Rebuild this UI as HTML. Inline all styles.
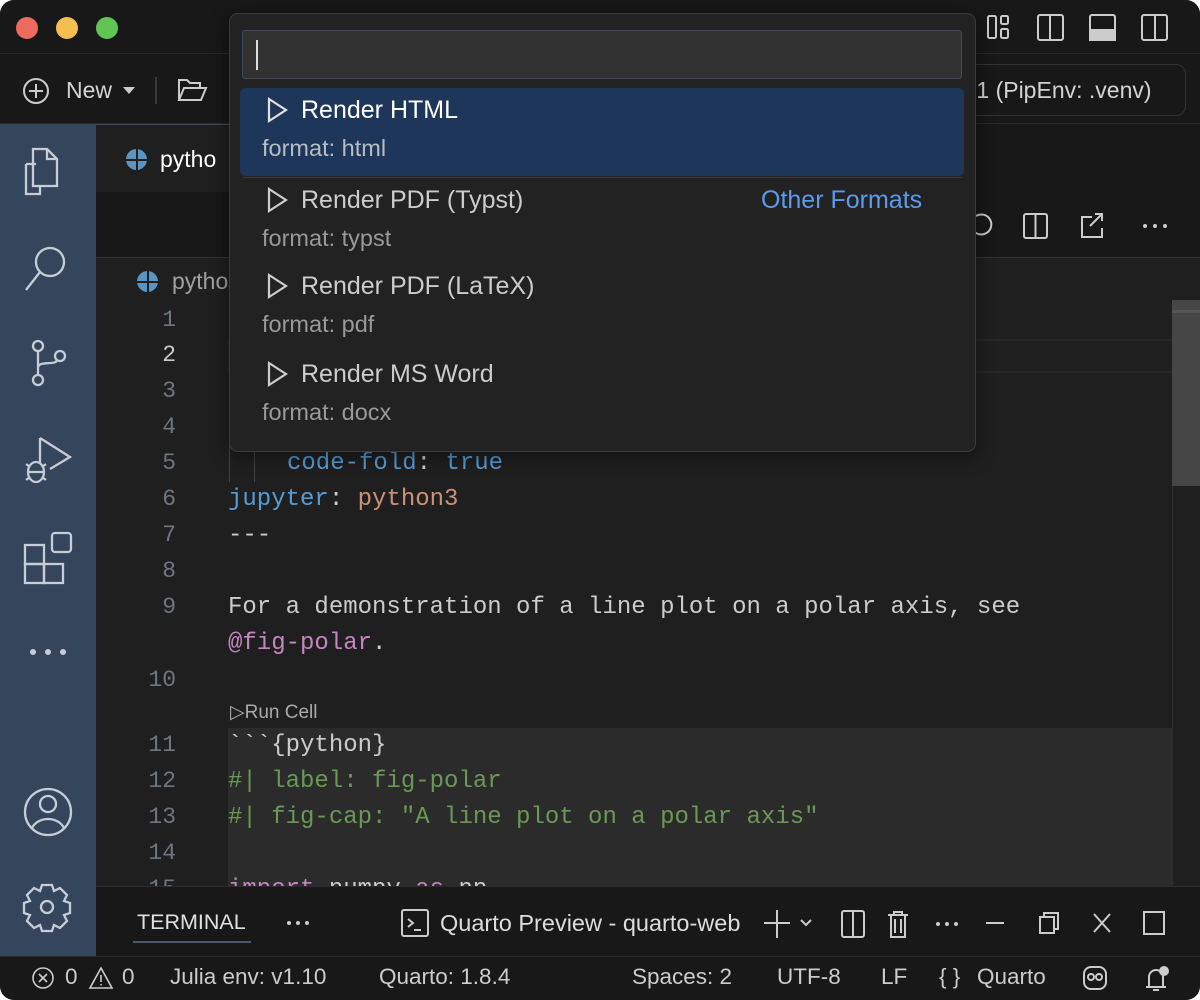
<!DOCTYPE html>
<html><head><meta charset="utf-8"><style>
*{margin:0;padding:0;box-sizing:border-box}
body{width:1200px;height:1000px;background:#fff;font-family:"Liberation Sans",sans-serif;overflow:hidden;position:relative}
.win{position:absolute;left:0;top:0;width:1200px;height:1000px;background:#1f1f1f;border-radius:14px;overflow:hidden}
.abs{position:absolute}
.t{position:absolute;white-space:pre;color:#cccccc}
.mono{font-family:"Liberation Mono",monospace;font-size:24px}
.ln{position:absolute;width:80px;left:96px;text-align:right;color:#6e7681;font-family:"Liberation Mono",monospace;font-size:23px}
.sb{position:absolute;top:964px;font-size:22.5px;color:#ccc;white-space:pre}
svg{position:absolute}
</style></head><body><div class="win">
<div class="abs" style="left:0;top:0;width:1200px;height:54px;background:#181818;border-bottom:1px solid #2b2b2b"></div>
<div class="abs" style="left:16px;top:17px;width:22px;height:22px;border-radius:50%;background:#ec6a5e"></div>
<div class="abs" style="left:56px;top:17px;width:22px;height:22px;border-radius:50%;background:#f4bf4f"></div>
<div class="abs" style="left:96px;top:17px;width:22px;height:22px;border-radius:50%;background:#61c554"></div>
<svg style="left:980px;top:10px" width="200" height="36" fill="none" stroke="#cccccc" stroke-width="2">
<rect x="8" y="6" width="8" height="22" rx="1.5"/><rect x="21" y="6" width="7" height="8" rx="1.5"/><rect x="21" y="19" width="7" height="9" rx="1.5"/>
<rect x="58" y="5" width="25" height="25" rx="2"/><line x1="70" y1="5" x2="70" y2="30"/>
<rect x="110" y="5" width="25" height="25" rx="2"/><rect x="110" y="20" width="25" height="10" fill="#cccccc"/>
<rect x="162" y="5" width="25" height="25" rx="2"/><line x1="175" y1="5" x2="175" y2="30"/>
</svg>
<div class="abs" style="left:0;top:54px;width:1200px;height:70px;background:#181818;border-bottom:1px solid #2b2b2b"></div>
<svg style="left:22px;top:77px" width="28" height="28" fill="none" stroke="#cccccc" stroke-width="2"><circle cx="14" cy="14" r="12"/><line x1="14" y1="7" x2="14" y2="21"/><line x1="7" y1="14" x2="21" y2="14"/></svg>
<div class="t" style="left:66px;top:77px;font-size:23px;color:#d4d4d4">New</div>
<svg style="left:122px;top:86px" width="14" height="10"><path d="M1 1 L13 1 L7 8 Z" fill="#cccccc"/></svg>
<div class="abs" style="left:155px;top:77px;width:2px;height:27px;background:#3a3a3a"></div>
<svg style="left:176px;top:76px" width="32" height="28" fill="none" stroke="#cccccc" stroke-width="2"><path d="M3 24 V4 H11 L14 7 H24 V11 M3 24 L8 12 H30 L25 24 Z"/></svg>
<div class="abs" style="left:900px;top:64px;width:286px;height:52px;border:1px solid #333;border-radius:10px"></div>
<div class="t" style="left:970px;top:77px;font-size:23px;color:#d4d4d4">.1 (PipEnv: .venv)</div>
<div class="abs" style="left:0;top:124px;width:96px;height:832px;background:#35455b"></div>
<svg style="left:0;top:124px" width="96" height="832" fill="none" stroke="#c5cdd8" stroke-width="2.3">
<path d="M26 40 h10 M26 40 v30 h14 v-8 M33 25 h14 l10 10 v27 h-24 z M47 25 v10 h10"/>
<circle cx="50" cy="138" r="14"/><line x1="40" y1="148" x2="26" y2="166"/>
<circle cx="38" cy="222" r="5"/><circle cx="38" cy="256" r="5"/><circle cx="60" cy="232" r="5"/><path d="M38 227 V251 M38 244 C38 236 56 242 57 236"/>
<path d="M40 314 L70 333 L50 345 M40 314 V340"/><ellipse cx="36" cy="348" rx="8" ry="10"/><path d="M26 340 l4 3 M26 356 l4-3 M46 340 l-4 3 M46 356 l-4-3 M28 348 h16"/>
<rect x="25" y="421" width="19" height="19"/><rect x="25" y="440" width="19" height="19"/><rect x="44" y="440" width="19" height="19"/><rect x="52" y="409" width="19" height="19" rx="3"/>
<circle cx="48" cy="688" r="23"/><circle cx="48" cy="680" r="8"/><path d="M32 704 C38 692 58 692 64 704"/>
<circle cx="47" cy="783" r="6"/><path d="M42 761 h10 l2 6 6-3 7 7-3 6 6 2 v10 l-6 2 3 6-7 7-6-3-2 6 h-10 l-2-6-6 3-7-7 3-6-6-2 v-10 l6-2-3-6 7-7 6 3 z"/>
</svg>
<div class="abs" style="left:30px;top:649px;width:6px;height:6px;border-radius:50%;background:#c5cdd8;box-shadow:15px 0 #c5cdd8,30px 0 #c5cdd8"></div>
<div class="abs" style="left:96px;top:124px;width:1104px;height:134px;background:#181818;border-bottom:1px solid #333"></div>
<div class="abs" style="left:96px;top:124px;width:136px;height:68px;background:#1f1f1f;border-top:1px solid #3b4b63"></div>
<div class="abs" style="left:126px;top:149px;width:21px;height:21px;border-radius:50%;background:#5b94c1"></div>
<div class="abs" style="left:135.5px;top:149px;width:2px;height:21px;background:#1f1f1f"></div><div class="abs" style="left:126px;top:158.5px;width:21px;height:2px;background:#1f1f1f"></div>
<div class="t" style="left:160px;top:146px;font-size:23px;color:#fff">pytho</div>
<svg style="left:960px;top:208px" width="210" height="36" fill="none" stroke="#cccccc" stroke-width="2"><path d="M16 8 a10 10 0 1 1 -3 14"/><rect x="64" y="6" width="23" height="24" rx="2"/><line x1="75.5" y1="6" x2="75.5" y2="30"/><path d="M132 9 h-10 v20 h20 v-9 M130 18 l12-12 M135 6 h7 v7"/></svg>
<div class="abs" style="left:1143px;top:224px;width:4px;height:4px;border-radius:50%;background:#ccc;box-shadow:10px 0 #ccc,20px 0 #ccc"></div>
<div class="abs" style="left:137px;top:271px;width:21px;height:21px;border-radius:50%;background:#5b94c1"></div>
<div class="abs" style="left:146.5px;top:271px;width:2px;height:21px;background:#1f1f1f"></div><div class="abs" style="left:137px;top:280.5px;width:21px;height:2px;background:#1f1f1f"></div>
<div class="t" style="left:172px;top:268px;font-size:23px;color:#a0a0a0">pytho</div>
<div class="abs" style="left:228px;top:339px;width:970px;height:34px;border:2px solid #282828"></div>
<div class="abs" style="left:1172px;top:300px;width:28px;height:186px;background:#464646"></div>
<div class="abs" style="left:1172px;top:310px;width:28px;height:3px;background:#555"></div>
<div class="abs" style="left:228px;top:728px;width:944px;height:158px;background:#2b2b2b"></div>
<div class="abs" style="left:1172px;top:486px;width:1px;height:400px;background:#2e2e2e"></div>
<div class="ln" style="top:307px">1</div><div class="ln" style="top:342px;color:#ccc">2</div><div class="ln" style="top:378px">3</div><div class="ln" style="top:414px">4</div><div class="ln" style="top:450px">5</div><div class="ln" style="top:486px">6</div><div class="ln" style="top:522px">7</div><div class="ln" style="top:558px">8</div><div class="ln" style="top:594px">9</div><div class="ln" style="top:667px">10</div><div class="ln" style="top:732px">11</div><div class="ln" style="top:768px">12</div><div class="ln" style="top:804px">13</div><div class="ln" style="top:840px">14</div><div class="ln" style="top:876px">15</div>
<div class="abs" style="left:229px;top:440px;width:1px;height:42px;background:#444"></div>
<div class="abs" style="left:254px;top:440px;width:1px;height:42px;background:#444"></div>
<div class="t mono" style="left:287px;top:450px"><span style="color:#569cd6">code-fold</span>: <span style="color:#569cd6">true</span></div>
<div class="t mono" style="left:228px;top:486px"><span style="color:#569cd6">jupyter</span>: <span style="color:#ce9178">python3</span></div>
<div class="t mono" style="left:228px;top:522px">---</div>
<div class="t mono" style="left:228px;top:594px">For a demonstration of a line plot on a polar axis, see</div>
<div class="t mono" style="left:228px;top:630px"><span style="color:#c586c0">@fig-polar</span>.</div>
<div class="t" style="left:230px;top:701px;font-size:19px;color:#aaa">▷Run Cell</div>
<div class="t mono" style="left:228px;top:732px">&#96;&#96;&#96;{python}</div>
<div class="t mono" style="left:228px;top:768px;color:#6a9955">#| label: fig-polar</div>
<div class="t mono" style="left:228px;top:804px;color:#6a9955">#| fig-cap: "A line plot on a polar axis"</div>
<div class="t mono" style="left:228px;top:876px"><span style="color:#c586c0">import</span> numpy <span style="color:#c586c0">as</span> np</div>
<div class="abs" style="left:96px;top:886px;width:1104px;height:70px;background:#181818;border-top:1px solid #2b2b2b"></div>
<div class="t" style="left:137px;top:910px;font-size:21.5px;color:#e0e0e0">TERMINAL</div>
<div class="abs" style="left:133px;top:941px;width:118px;height:2px;background:#4a5a73"></div>
<div class="abs" style="left:287px;top:921px;width:4px;height:4px;border-radius:50%;background:#ccc;box-shadow:9px 0 #ccc,18px 0 #ccc"></div>
<svg style="left:400px;top:908px" width="780" height="32" fill="none" stroke="#cccccc" stroke-width="2">
<rect x="2" y="2" width="26" height="26" rx="2"/><path d="M8 11 l5 4 -5 4 M14 22 h7"/>
<path d="M377 2 v28 M364 15 h26 M401 12 l5 5 5-5"/>
<rect x="442" y="3" width="22" height="26" rx="2"/><line x1="453" y1="3" x2="453" y2="29"/>
<path d="M488 7 h20 M494 7 v-3 h8 v3 M491 7 v22 h14 v-22 M495 11 v14 M501 11 v14"/>
<path d="M586 15 h18 M640 9 h14 v16 h-14 z M644 9 v-4 h14 v16 h-4 M694 6 l16 18 M710 6 l-16 18"/>
<rect x="744" y="4" width="20" height="22"/>
</svg>
<div class="abs" style="left:936px;top:922px;width:4px;height:4px;border-radius:50%;background:#ccc;box-shadow:9px 0 #ccc,18px 0 #ccc"></div>
<div class="t" style="left:440px;top:910px;font-size:23.5px;color:#ddd">Quarto Preview - quarto-web</div>
<div class="abs" style="left:0;top:956px;width:1200px;height:44px;background:#181818;border-top:1px solid #2b2b2b"></div>
<svg style="left:30px;top:965px" width="90" height="28" fill="none" stroke="#ccc" stroke-width="1.6"><circle cx="13" cy="13" r="10"/><path d="M9 9 l8 8 M17 9 l-8 8"/><path d="M71 3 L82 23 H60 Z M71 10 v7 M71 19 v1.5"/></svg>
<div class="sb" style="left:65px">0</div><div class="sb" style="left:122px">0</div>
<div class="sb" style="left:170px">Julia env: v1.10</div>
<div class="sb" style="left:379px">Quarto: 1.8.4</div>
<div class="sb" style="left:632px">Spaces: 2</div>
<div class="sb" style="left:777px">UTF-8</div>
<div class="sb" style="left:881px">LF</div>
<div class="sb" style="left:939px">{ }</div>
<div class="sb" style="left:977px">Quarto</div>
<svg style="left:1080px;top:963px" width="100" height="30" fill="none" stroke="#ccc" stroke-width="2"><rect x="4" y="4" width="22" height="22" rx="7"/><circle cx="11" cy="14" r="3"/><circle cx="19" cy="14" r="3"/><path d="M66 24 h20 M69 24 v-10 a7 7 0 0 1 14 0 v10 M73 27 h6"/><circle cx="84" cy="8" r="4" fill="#ccc"/></svg>
<div class="abs" style="left:229px;top:13px;width:747px;height:439px;background:#222222;border:1px solid #3c3c3c;border-radius:9px;box-shadow:0 4px 18px rgba(0,0,0,.5)"></div>
<div class="abs" style="left:242px;top:30px;width:720px;height:49px;background:#313131;border:1px solid #3d4d64;border-radius:3px"></div>
<div class="abs" style="left:256px;top:40px;width:2px;height:30px;background:#ddd"></div>
<div class="abs" style="left:240px;top:88px;width:724px;height:88px;background:#1d3659;border-radius:6px"></div>
<div class="abs" style="left:242px;top:177px;width:720px;height:1px;background:#3a3a3a"></div>
<svg style="left:266px;top:96px" width="24" height="330" fill="none" stroke="#e0e0e0" stroke-width="2.2"><path d="M3 3 L20 14 L3 25 Z"/><path d="M3 93 L20 104 L3 115 Z" stroke="#ccc"/><path d="M3 179 L20 190 L3 201 Z" stroke="#ccc"/><path d="M3 267 L20 278 L3 289 Z" stroke="#ccc"/></svg>
<div class="t" style="left:301px;top:96px;font-size:25px;color:#fff">Render HTML</div>
<div class="t" style="left:262px;top:135px;font-size:23.5px;color:#b8bcc4">format: html</div>
<div class="t" style="left:301px;top:186px;font-size:25px;color:#ccc">Render PDF (Typst)</div>
<div class="t" style="left:761px;top:186px;font-size:25px;color:#5a9bf0">Other Formats</div>
<div class="t" style="left:262px;top:225px;font-size:23.5px;color:#999">format: typst</div>
<div class="t" style="left:301px;top:272px;font-size:25px;color:#ccc">Render PDF (LaTeX)</div>
<div class="t" style="left:262px;top:311px;font-size:23.5px;color:#999">format: pdf</div>
<div class="t" style="left:301px;top:360px;font-size:25px;color:#ccc">Render MS Word</div>
<div class="t" style="left:262px;top:399px;font-size:23.5px;color:#999">format: docx</div>
</div></body></html>
